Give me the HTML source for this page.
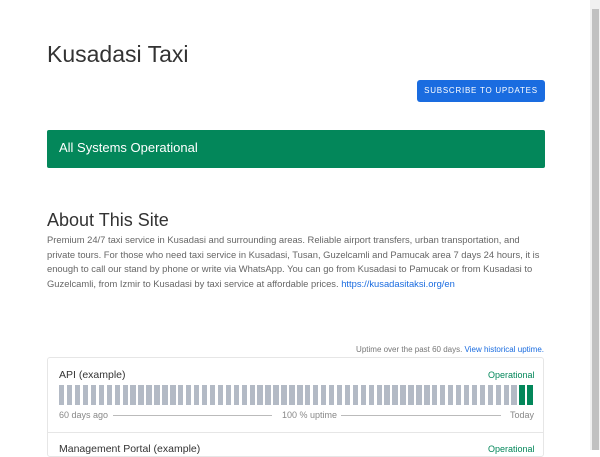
<!DOCTYPE html>
<html><head><meta charset="utf-8"><style>
html,body{margin:0;padding:0;width:600px;height:450px;overflow:hidden;background:#fff;font-family:"Liberation Sans",sans-serif;color:#333}
.abs{position:absolute}
h1{position:absolute;left:47px;top:40px;margin:0;font-size:23px;font-weight:400;color:#333;line-height:28px}
.btn{left:417px;top:80px;width:128px;height:22px;background:#1a6ce0;border-radius:3px;color:#fff;font-size:8px;letter-spacing:0.75px;text-align:center;line-height:22px}
.banner{left:47px;top:130px;width:498px;height:38px;background:#03875a;border-radius:2px;color:#fff;font-size:13px;line-height:35px;padding-left:12px;box-sizing:border-box}
h2{position:absolute;left:47px;top:210px;margin:0;font-size:18px;font-weight:400;color:#333}
.about{left:47px;top:233px;width:500px;font-size:9.4px;line-height:14.5px;color:#666}
.about a{color:#1a6ce0;text-decoration:none}
.upt{right:56px;top:345px;font-size:8px;color:#777}
.upt a{color:#1a6ce0}
.card{left:47px;top:357px;width:497px;height:100px;border:1px solid #e6e6e6;border-radius:3px;box-sizing:border-box}
.sep{left:47px;top:432px;width:497px;height:1px;background:#e6e6e6}
.bars{left:59px;top:385px;width:474px;height:20px;display:flex;justify-content:space-between}
.bars i{display:block;width:5.4px;height:20px;background:#b3bac5}
.bars i.g{background:#03875a}
.sb{left:590px;top:0;width:10px;height:450px;background:#f1f1f1}
.th{left:592px;top:9px;width:7px;height:441px;background:#c1c1c1}
.op{left:488px;font-size:9px;color:#03875a;width:45px;text-align:right}
</style></head><body>
<h1>Kusadasi Taxi</h1>
<div class="abs btn">SUBSCRIBE TO UPDATES</div>
<div class="abs banner">All Systems Operational</div>
<h2>About This Site</h2>
<div class="abs about">Premium 24/7 taxi service in Kusadasi and surrounding areas. Reliable airport transfers, urban transportation, and private tours. For those who need taxi service in Kusadasi, Tusan, Guzelcamli and Pamucak area 7 days 24 hours, it is enough to call our stand by phone or write via WhatsApp. You can go from Kusadasi to Pamucak or from Kusadasi to Guzelcamli, from Izmir to Kusadasi by taxi service at affordable prices. <a>https://kusadasitaksi.org/en</a></div>
<div class="abs upt">Uptime over the past 60 days. <a>View historical uptime.</a></div>
<div class="abs card"></div>
<div class="abs" style="left:59px;top:369px;font-size:10.5px;color:#333">API (example)</div>
<div class="abs op" style="top:370px">Operational</div>
<div class="abs bars"><i></i><i></i><i></i><i></i><i></i><i></i><i></i><i></i><i></i><i></i><i></i><i></i><i></i><i></i><i></i><i></i><i></i><i></i><i></i><i></i><i></i><i></i><i></i><i></i><i></i><i></i><i></i><i></i><i></i><i></i><i></i><i></i><i></i><i></i><i></i><i></i><i></i><i></i><i></i><i></i><i></i><i></i><i></i><i></i><i></i><i></i><i></i><i></i><i></i><i></i><i></i><i></i><i></i><i></i><i></i><i></i><i></i><i></i><i class="g"></i><i class="g"></i></div>
<div class="abs" style="left:59px;top:410px;font-size:9px;color:#888">60 days ago</div>
<div class="abs" style="left:113px;top:415px;width:159px;height:1px;background:#bbb"></div>
<div class="abs" style="left:282px;top:410px;font-size:9px;color:#888">100 % uptime</div>
<div class="abs" style="left:341px;top:415px;width:160px;height:1px;background:#bbb"></div>
<div class="abs" style="left:510px;top:410px;font-size:9px;color:#888">Today</div>
<div class="abs sep"></div>
<div class="abs" style="left:59px;top:443px;font-size:10.5px;color:#333">Management Portal (example)</div>
<div class="abs op" style="top:444px">Operational</div>
<div class="abs sb"></div><div class="abs th"></div>
</body></html>
